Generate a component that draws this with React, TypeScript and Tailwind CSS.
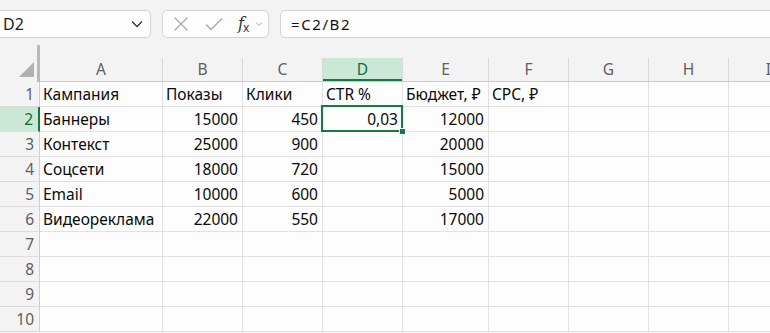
import React from "react";

const cols = [
  { l: "A", w: 123 },
  { l: "B", w: 80 },
  { l: "C", w: 80 },
  { l: "D", w: 80 },
  { l: "E", w: 86 },
  { l: "F", w: 80 },
  { l: "G", w: 80 },
  { l: "H", w: 80 },
  { l: "I", w: 80 },
];

type Cell = { t: string; r?: boolean };
const data: Cell[][] = [
  [{ t: "Кампания" }, { t: "Показы" }, { t: "Клики" }, { t: "CTR %" }, { t: "Бюджет, ₽" }, { t: "CPC, ₽" }],
  [{ t: "Баннеры" }, { t: "15000", r: true }, { t: "450", r: true }, { t: "0,03", r: true }, { t: "12000", r: true }],
  [{ t: "Контекст" }, { t: "25000", r: true }, { t: "900", r: true }, { t: "" }, { t: "20000", r: true }],
  [{ t: "Соцсети" }, { t: "18000", r: true }, { t: "720", r: true }, { t: "" }, { t: "15000", r: true }],
  [{ t: "Email" }, { t: "10000", r: true }, { t: "600", r: true }, { t: "" }, { t: "5000", r: true }],
  [{ t: "Видеореклама" }, { t: "22000", r: true }, { t: "550", r: true }, { t: "" }, { t: "17000", r: true }],
];

const font = { fontFamily: '"Noto Sans", "Open Sans", sans-serif' };

export default function App() {
  return (
    <div className="w-[770px] h-[333px] overflow-hidden bg-[#f3f3f3] relative" style={font}>
      {/* toolbar */}
      <div className="flex items-start pt-[10px] h-[45px]">
        <div className="-ml-[4px] w-[155px] h-[28px] bg-[#fdfdfd] border border-[#d4d4d4] rounded-[5px] flex items-center justify-between pl-[6px] pr-[6px]">
          <span className="text-[16px] text-[#222] leading-none">D2</span>
          <svg width="12" height="8" viewBox="0 0 12 8" className="mr-[1px]">
            <path d="M1 1.5 L6 6.5 L11 1.5" fill="none" stroke="#333" strokeWidth="1.3" />
          </svg>
        </div>
        <div className="ml-[11px] w-[107px] h-[28px] bg-[#fdfdfd] border border-[#d4d4d4] rounded-[5px] flex items-center pl-[10px]">
          <svg width="16" height="16" viewBox="0 0 16 16">
            <path d="M1.5 1.5 L14.5 14.5 M14.5 1.5 L1.5 14.5" stroke="#a9a9a9" strokeWidth="1.3" fill="none" />
          </svg>
          <svg width="18" height="14" viewBox="0 0 18 14" className="ml-[16px]">
            <path d="M1 7.5 L6 12.5 L17 1.5" stroke="#a9a9a9" strokeWidth="1.3" fill="none" />
          </svg>
          <span className="ml-[15px] text-[16px] leading-none text-[#333] flex items-end" style={{ fontFamily: '"DejaVu Serif", serif' }}>
            <span className="italic">f</span>
            <span className="text-[12px] -ml-[1px] translate-y-[2px]" style={{ fontFamily: '"Noto Sans", sans-serif' }}>x</span>
          </span>
          <svg width="8" height="6" viewBox="0 0 8 6" className="ml-[6px]">
            <path d="M1 1.5 L4 4.5 L7 1.5" fill="none" stroke="#aaa" strokeWidth="1" />
          </svg>
        </div>
        <div className="ml-[11px] flex-1 -mr-[10px] h-[28px] bg-[#fdfdfd] border border-[#d4d4d4] rounded-[5px] flex items-center pl-[10px]">
          <span className="text-[15px] text-[#111] tracking-[1.6px] leading-none">=C2/B2</span>
        </div>
      </div>

      {/* header row */}
      <div className="flex h-[37px]">
        <div className="w-[40px] h-full border-r-[3px] border-[#b9b9b9] relative shrink-0">
          <svg width="16" height="16" viewBox="0 0 16 16" className="absolute left-[19px] top-[17px]">
            <path d="M15 0 L15 15 L0 15 Z" fill="#b0b0b0" />
          </svg>
        </div>
        <div className="flex self-end h-[24px] border-b border-[#cacaca]">
          {cols.map((c) => {
            const sel = c.l === "D";
            return (
              <div
                key={c.l}
                style={{ width: c.w }}
                className={`shrink-0 h-full flex items-center justify-center pt-[1px] text-[15.5px] border-r ${
                  sel ? "bg-[#cae8d5] text-[#0e6f3c] border-[#d8d8d8] shadow-[inset_0_-2px_0_#107c41]" : "text-[#5f5f5f] border-[#d8d8d8]"
                }`}
              >
                {c.l}
              </div>
            );
          })}
        </div>
      </div>

      {/* rows */}
      {Array.from({ length: 10 }).map((_, ri) => {
        const row = data[ri] || [];
        const selRow = ri === 1;
        return (
          <div key={ri} className="flex h-[25px]">
            <div
              className={`w-[40px] shrink-0 h-full flex items-center justify-end pr-[5px] pt-[2px] text-[15.5px] border-b border-[#dcdcdc] ${
                selRow ? "bg-[#cae8d5] text-[#0e6f3c] border-r-2 border-r-[#107c41]" : "text-[#5f5f5f] border-r border-r-[#cfcfcf]"
              }`}
            >
              {ri + 1}
            </div>
            {cols.map((c, ci) => {
              const cell = row[ci];
              const isSel = ri === 1 && ci === 3;
              return (
                <div
                  key={c.l}
                  style={{ width: c.w }}
                  className={`shrink-0 h-full bg-[#fdfdfd] border-r border-b border-[#e1e1e1] flex items-center pt-[2px] text-[15.5px] text-[#0a0a0a] whitespace-nowrap relative ${
                    cell?.r ? "justify-end pr-[4px]" : "pl-[3px]"
                  }`}
                >
                  {cell?.t}
                  {isSel && (
                    <>
                      <div className="absolute left-[-2px] top-[-2px] w-[82px] h-[27px] border-2 border-[#107c41]" />
                      <div className="absolute left-[76px] top-[21px] w-[7px] h-[7px] bg-[#107c41] border border-[#fdfdfd] z-10" />
                    </>
                  )}
                </div>
              );
            })}
          </div>
        );
      })}
    </div>
  );
}
